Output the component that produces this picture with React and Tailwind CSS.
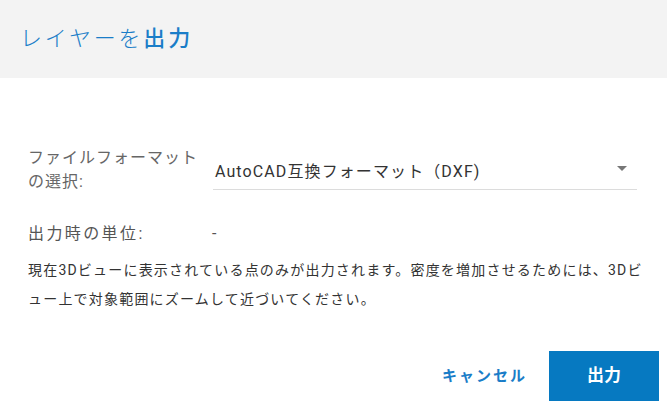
import React from "react";

const font = { fontFamily: '"Roboto", "Noto Sans CJK JP", sans-serif' };

function App() {
  return (
    <div className="w-[667px] h-[410px] bg-white flex flex-col" style={font}>
      <div className="h-[78px] bg-[#f3f3f3] flex items-center px-[20px]">
        <h1 className="text-[22px] text-[#1a7dc8] font-light tracking-[2.8px] leading-none">
          レイヤーを<span className="font-medium">出力</span>
        </h1>
      </div>
      <div className="flex flex-col pl-[28px]">
        <div className="flex items-center mt-[68px]">
          <div className="w-[185px] text-[16px] leading-[24px] text-[#666] tracking-[1px]">
            ファイルフォーマットの選択:
          </div>
          <div className="w-[424px] flex items-center justify-between border-b border-[#dcdcdc] h-[38px] pl-[2px] pr-[10px] mt-[2px]">
            <span className="text-[16px] text-[#333] tracking-[1.1px] mt-[3px]">AutoCAD互換フォーマット（DXF)</span>
            <span className="w-0 h-0 border-l-[5px] border-r-[5px] border-t-[5px] border-l-transparent border-r-transparent border-t-[#777] mb-[4px]"></span>
          </div>
        </div>
        <div className="flex items-center mt-[28px] text-[16px] leading-[24px]">
          <div className="w-[184px] text-[#555] tracking-[2.4px]">出力時の単位:</div>
          <div className="text-[#555]">-</div>
        </div>
        <p className="w-[625px] mt-[10px] text-[14px] leading-[29px] text-[#333] tracking-[1.2px]">
          現在3Dビューに表示されている点のみが出力されます。密度を増加させるためには、3Dビュー上で対象範囲にズームして近づいてください。
        </p>
      </div>
      <div className="flex justify-end items-center mt-auto mb-[9px] pr-[8px] gap-[22px]">
        <button className="text-[15px] font-bold text-[#1a7dc8] tracking-[2px]">キャンセル</button>
        <button className="w-[110px] h-[50px] bg-[#0679c1] text-white text-[17px] font-bold">出力</button>
      </div>
    </div>
  );
}

export default App;
